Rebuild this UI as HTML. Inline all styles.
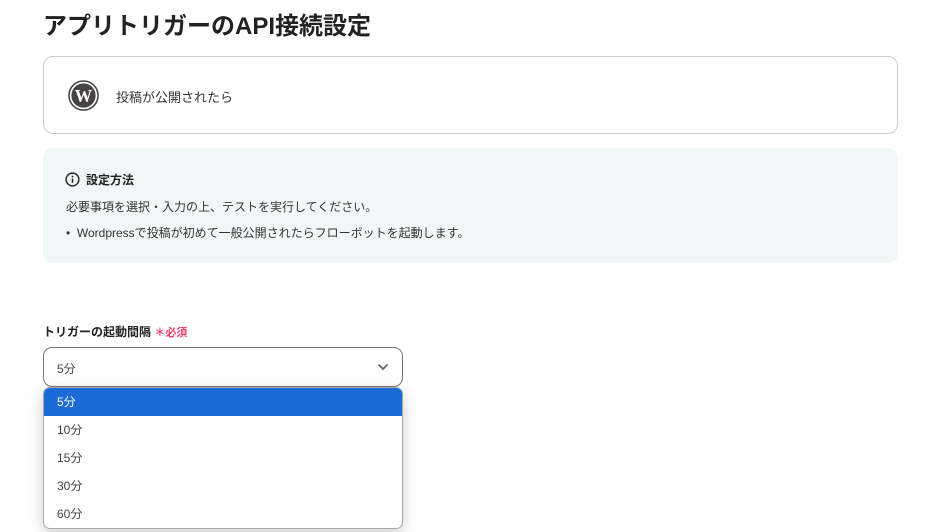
<!DOCTYPE html><html><head><meta charset="utf-8"><style>
body{margin:0;width:941px;height:532px;background:#fff;font-family:"Liberation Sans","Noto Sans CJK JP",sans-serif;color:#333;position:relative;overflow:hidden}
.a{position:absolute}
h1{position:absolute;left:43px;top:10px;margin:0;font-size:24px;font-weight:bold;color:#222;line-height:34px}
.card{left:43px;top:56px;width:853px;height:76px;border:1px solid #ccc;border-radius:10px}
.info{left:43px;top:148px;width:855px;height:115px;background:#f0f8f7;border-radius:10px}
.sel{left:43px;top:347px;width:358px;height:38px;border:1px solid #777;border-radius:9px}
.dd{left:43px;top:387px;width:358px;height:140px;border:1px solid #aaa;border-radius:7px;background:#fff;box-shadow:0 4px 14px rgba(0,0,0,.2);overflow:hidden;font-size:12px}
.dd div{height:28px;line-height:28px;padding-left:13px;color:#444}
</style></head><body>
<h1>アプリトリガーのAPI接続設定</h1>
<div class="a card">
<svg class="a" style="left:24px;top:23px" width="31" height="31" viewBox="0 0 32 32"><circle cx="16" cy="16" r="15" fill="none" stroke="#464342" stroke-width="1.6"/><circle cx="16" cy="16" r="12.5" fill="#464342"/><text x="16" y="22.5" text-anchor="middle" font-family="Liberation Serif" font-weight="bold" font-size="18" fill="#fff">W</text></svg>
<span class="a" style="left:72px;top:30px;font-size:13px;color:#333">投稿が公開されたら</span>
</div>
<div class="a info">
<svg class="a" style="left:22px;top:24px" width="15" height="15" viewBox="0 0 16 16"><circle cx="8" cy="8" r="6.8" fill="none" stroke="#222" stroke-width="1.5"/><rect x="7.2" y="7" width="1.6" height="4.5" fill="#222"/><circle cx="8" cy="4.8" r="1" fill="#222"/></svg>
<span class="a" style="left:43px;top:23px;font-size:12px;font-weight:bold;color:#222">設定方法</span>
<span class="a" style="left:23px;top:50px;font-size:12px;color:#333">必要事項を選択・入力の上、テストを実行してください。</span>
<span class="a" style="left:23px;top:76px;font-size:12px;color:#333">•&nbsp;&nbsp;Wordpressで投稿が初めて一般公開されたらフローボットを起動します。</span>
</div>
<span class="a" style="left:43px;top:323px;font-size:12px;font-weight:bold;color:#222">トリガーの起動間隔 <span style="color:#e8436a;font-size:11px">＊必須</span></span>
<div class="a sel"><span class="a" style="left:13px;top:12px;font-size:12px;color:#444">5分</span>
<svg class="a" style="left:333px;top:15px" width="12" height="8" viewBox="0 0 12 8"><path d="M1.5 1.5L6 6L10.5 1.5" fill="none" stroke="#666" stroke-width="1.8"/></svg></div>
<div class="a" style="left:43px;top:452px;width:4px;height:14px;background:#456;border-radius:2px"></div>
<div class="a dd"><div style="background:#1b6bd6;color:#fff">5分</div><div>10分</div><div>15分</div><div>30分</div><div>60分</div></div>
</body></html>
